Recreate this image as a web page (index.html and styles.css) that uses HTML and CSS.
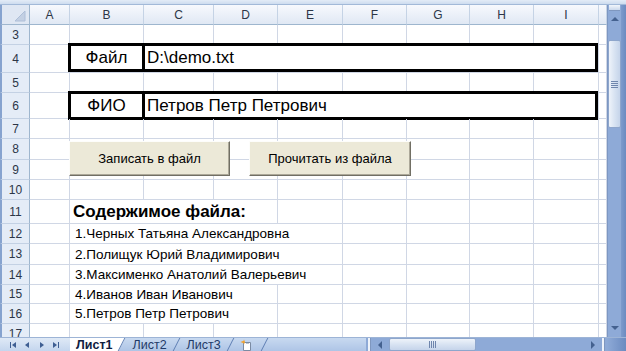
FILE: index.html
```html
<!DOCTYPE html>
<html lang="ru">
    <head>
        <meta charset="UTF-8" />
        <meta name="viewport" content="width=device-width, initial-scale=1.0" />
        <title>Лист1</title>
        <link rel="stylesheet" href="styles.css">
    </head>
    <body>
        <div class="window">
            <div class="frame-top"></div>
            <div class="main">
                <div class="sheet">
                    <table class="grid">
                        <colgroup>
                            <col class="c-num"><col class="c-a"><col class="c-b"><col class="c-c"><col class="c-d"><col class="c-e"><col class="c-f"><col class="c-g"><col class="c-h"><col class="c-i"><col class="c-j">
                        </colgroup>
                        <tr class="row-head">
                            <th class="corner">
                                <svg width="26" height="19" viewBox="0 0 26 19"><path d="M23 6V16H13z" fill="#c3d0e3" stroke="#aebfd8" stroke-width="1"/></svg>
                            </th>
                            <th>A</th><th>B</th><th>C</th><th>D</th><th>E</th><th>F</th><th>G</th><th>H</th><th>I</th><th></th>
                        </tr>
                        <tr>
                            <th>3</th><td></td><td></td><td></td><td></td><td></td><td></td><td></td><td></td><td></td><td></td>
                        </tr>
                        <tr class="row-28">
                            <th>4</th><td></td>
                            <td colspan="8" class="field-cell">
                                <div class="field">
                                    <span class="field-label">Файл</span>
                                    <span class="field-value">D:\demo.txt</span>
                                </div>
                            </td>
                            <td></td>
                        </tr>
                        <tr>
                            <th>5</th><td></td><td></td><td></td><td></td><td></td><td></td><td></td><td></td><td></td><td></td>
                        </tr>
                        <tr class="row-26">
                            <th>6</th><td></td>
                            <td colspan="8" class="field-cell">
                                <div class="field">
                                    <span class="field-label">ФИО</span>
                                    <span class="field-value">Петров Петр Петрович</span>
                                </div>
                            </td>
                            <td></td>
                        </tr>
                        <tr>
                            <th>7</th><td></td><td></td><td></td><td></td><td></td><td></td><td></td><td></td><td></td><td></td>
                        </tr>
                        <tr class="row-21">
                            <th>8</th><td></td><td></td><td></td><td></td><td></td><td></td><td></td><td></td><td></td><td></td>
                        </tr>
                        <tr>
                            <th>9</th><td></td><td></td><td></td><td></td><td></td><td></td><td></td><td></td><td></td><td></td>
                        </tr>
                        <tr>
                            <th>10</th><td></td><td></td><td></td><td></td><td></td><td></td><td></td><td></td><td></td><td></td>
                        </tr>
                        <tr class="row-24">
                            <th>11</th><td></td><td colspan="3" class="title">Содержимое файла:</td><td></td><td></td><td></td><td></td><td></td><td></td>
                        </tr>
                        <tr>
                            <th>12</th><td></td><td colspan="4" class="item">1.Черных Татьяна Александровна</td><td></td><td></td><td></td><td></td><td></td>
                        </tr>
                        <tr class="row-21">
                            <th>13</th><td></td><td colspan="4" class="item">2.Полищук Юрий Владимирович</td><td></td><td></td><td></td><td></td><td></td>
                        </tr>
                        <tr>
                            <th>14</th><td></td><td colspan="4" class="item">3.Максименко Анатолий Валерьевич</td><td></td><td></td><td></td><td></td><td></td>
                        </tr>
                        <tr class="row-19">
                            <th>15</th><td></td><td colspan="3" class="item">4.Иванов Иван Иванович</td><td></td><td></td><td></td><td></td><td></td><td></td>
                        </tr>
                        <tr>
                            <th>16</th><td></td><td colspan="3" class="item">5.Петров Петр Петрович</td><td></td><td></td><td></td><td></td><td></td><td></td>
                        </tr>
                        <tr>
                            <th>17</th><td></td><td></td><td></td><td></td><td></td><td></td><td></td><td></td><td></td><td></td>
                        </tr>
                    </table>

                    <div class="actions">
                        <button class="btn btn-write">Записать в файл</button>
                        <button class="btn btn-read">Прочитать из файла</button>
                    </div>
                </div>

                <div class="vscroll">
                    <div class="vbar">
                        <div class="split"></div>
                        <div class="arrow">
                            <svg width="14" height="17" viewBox="0 0 14 17"><path d="M3 10H11L7 6z" fill="#44618f"/></svg>
                        </div>
                        <div class="vtrack-top"></div>
                        <div class="vthumb">
                            <span class="grip"></span>
                        </div>
                        <div class="vtrack"></div>
                        <div class="arrow">
                            <svg width="14" height="17" viewBox="0 0 14 17"><path d="M3 6H11L7 10z" fill="#44618f"/></svg>
                        </div>
                    </div>
                    <div class="frame-right"></div>
                </div>
            </div>

            <div class="tabbar">
                <div class="sheet-nav">
                    <svg width="70" height="14" viewBox="0 0 70 14">
                        <g fill="#3f5f93">
                            <rect x="10" y="4" width="1" height="6"/>
                            <path d="M16 4V10L12 7z"/>
                            <path d="M29 4V10L25 7z"/>
                            <path d="M40 4V10L44 7z"/>
                            <path d="M53 4V10L57 7z"/>
                            <rect x="58" y="4" width="1" height="6"/>
                        </g>
                    </svg>
                </div>
                <div class="tabs">
                    <span class="tab tab-active">Лист1</span>
                    <span class="tab">Лист2</span>
                    <span class="tab">Лист3</span>
                    <span class="tab tab-new">
                        <svg width="14" height="12" viewBox="0 0 14 12">
                            <path d="M3.5 3.5H10.5V11.5H3.5z" fill="#fff" stroke="#7b8ba3"/>
                            <path d="M6 4H9" stroke="#7b8ba3"/>
                            <path d="M4 0.5L5 3L4 5.5L3 3z M0.5 3L3 2L5.5 3L3 4z" fill="#f0a22e"/>
                        </svg>
                    </span>
                </div>
                <div class="tab-space"></div>
                <div class="hscroll">
                    <span class="hsplit"></span>
                    <span class="harrow">
                        <svg width="14" height="14" viewBox="0 0 14 14"><path d="M9 3V11L5 7z" fill="#44618f"/></svg>
                    </span>
                    <span class="hthumb"><span class="hgrip"></span></span>
                    <span class="htrack"></span>
                    <span class="harrow">
                        <svg width="14" height="14" viewBox="0 0 14 14"><path d="M5 3V11L9 7z" fill="#44618f"/></svg>
                    </span>
                    <span class="hsplit"></span>
                </div>
                <div class="corner-frame"></div>
            </div>
        </div>
    </body>
</html>
```

FILE: styles.css
```css
* {
    box-sizing: border-box;
    margin: 0;
    padding: 0;
}
body {
    width: 626px;
    height: 351px;
    overflow: hidden;
    background: #fff;
    font-family: "Liberation Sans", Arial, sans-serif;
}
.window {
    display: flex;
    flex-direction: column;
    height: 351px;
}
.frame-top {
    height: 5px;
    background: linear-gradient(#e3ecf7, #cddcef);
    border-bottom: 1px solid #a2b9d8;
}
.main {
    display: flex;
    height: 332px;
}
.sheet {
    position: relative;
    width: 607px;
    overflow: hidden;
}

/* grid */
.grid {
    border-collapse: separate;
    border-spacing: 0;
    table-layout: fixed;
    width: 607px;
}
.c-num { width: 30px; }
.c-a { width: 40px; }
.c-b { width: 74px; }
.c-c { width: 70px; }
.c-d { width: 64px; }
.c-e { width: 65px; }
.c-f { width: 64px; }
.c-g { width: 63px; }
.c-h { width: 64px; }
.c-i { width: 65px; }
.c-j { width: 8px; }

.grid tr {
    height: 20px;
}
.grid tr.row-19 { height: 19px; }
.grid tr.row-21 { height: 21px; }
.grid tr.row-24 { height: 24px; }
.grid tr.row-26 { height: 26px; }
.grid tr.row-28 { height: 28px; }

.grid td {
    padding: 0;
    border-right: 1px solid #d0d7e5;
    border-bottom: 1px solid #d0d7e5;
    white-space: nowrap;
    overflow: visible;
    vertical-align: middle;
}
.grid th {
    padding: 0;
    font-weight: normal;
    font-size: 12px;
    color: #2c3647;
    text-align: center;
    background: #e4ecf7;
    border-right: 1px solid #9eb6ce;
    border-bottom: 1px solid #c3d1e4;
}
.grid th:first-child {
    border-left: 2px solid #86a3cf;
}
.row-head th {
    background: linear-gradient(#f7f9fd, #e0e8f4);
    border-right: 1px solid #c5d3e5;
    border-bottom: 1px solid #9eb6ce;
}
.row-head th.corner {
    border-right: 1px solid #9eb6ce;
    background: #dfe7f3;
    vertical-align: top;
    text-align: left;
}
.corner svg {
    display: block;
}

/* bordered input fields */
.field-cell {
    vertical-align: top !important;
}
.field {
    display: flex;
    height: 29px;
    margin: -2px 0 -3px -2px;
    border: 3px solid #000;
    background: #fff;
    font-size: 17px;
    color: #000;
}
.field-label {
    width: 74px;
    border-right: 3px solid #000;
    display: flex;
    align-items: center;
    justify-content: center;
}
.field-value {
    display: flex;
    align-items: center;
    padding-left: 2px;
}

/* file contents */
.title {
    padding-left: 3px !important;
    font-size: 17px;
    font-weight: bold;
}
.item {
    padding-left: 5px !important;
    font-size: 13.5px;
}

/* buttons over the sheet */
.actions {
    position: absolute;
    left: 69px;
    top: 136px;
    display: flex;
    gap: 19px;
}
.btn {
    height: 35px;
    background: #ece9d8;
    border: 1px solid;
    border-color: #fdfdfb #716f64 #716f64 #fdfdfb;
    box-shadow: inset -1px -1px #aca899;
    font-family: "Liberation Sans", Arial, sans-serif;
    font-size: 13px;
    color: #000;
}
.btn-write { width: 161px; }
.btn-read { width: 162px; }

/* vertical scroll bar */
.vscroll {
    display: flex;
    width: 19px;
}
.vbar {
    width: 14px;
    display: flex;
    flex-direction: column;
    background: #8eaad7;
    border-left: 1px solid #7d97c2;
}
.split {
    height: 6px;
    margin: 0 1px;
    background: linear-gradient(#f2f6fb, #cad8ec);
    border-bottom: 1px solid #7f97bf;
}
.arrow {
    height: 17px;
}
.arrow svg {
    display: block;
}
.vtrack-top {
    height: 12px;
}
.vthumb {
    height: 88px;
    border: 1px solid #8ea6cc;
    border-radius: 2px;
    background: linear-gradient(to right, #eef3fa, #d8e3f2 50%, #c5d4ea);
    display: flex;
    align-items: center;
    justify-content: center;
}
.grip {
    width: 7px;
    height: 7px;
    background: repeating-linear-gradient(#6f86ad 0 1px, transparent 1px 2px);
}
.vtrack {
    flex: 1;
}
.frame-right {
    flex: 1;
    background: linear-gradient(to right, #7d9bcc, #6b8bc0);
}

/* sheet tabs and horizontal scroll */
.tabbar {
    position: relative;
    z-index: 0;
    display: flex;
    height: 14px;
    background: linear-gradient(#c8d9f0, #aec5e6);
    border-top: 1px solid #9db4d6;
}
.sheet-nav {
    width: 70px;
    background: linear-gradient(#dfe9f6, #c4d6ee);
}
.sheet-nav svg {
    display: block;
}
.tabs {
    display: flex;
}
.tab {
    position: relative;
    display: flex;
    align-items: center;
    height: 13px;
    padding: 0 13px 0 7px;
    font-size: 12.5px;
    color: #1f3a68;
}
.tab::after {
    content: "";
    position: absolute;
    right: 3px;
    top: 0;
    bottom: 0;
    border-right: 1px solid #5f7fb3;
    transform: skewX(-27deg);
}
.tab-active {
    font-weight: bold;
    color: #0f203f;
    padding-left: 6px;
}
.tab-active::before {
    content: "";
    position: absolute;
    top: 0;
    bottom: 0;
    left: -12px;
    right: 3px;
    background: #fff;
    transform: skewX(-27deg);
    z-index: -1;
}
.tab-new {
    padding: 0 14px 0 6px;
}
.tab-new svg {
    display: block;
}
.tab-space {
    flex: 1;
}
.hscroll {
    display: flex;
    width: 241px;
    height: 13px;
    background: #8eaad7;
}
.hsplit {
    width: 7px;
    background: linear-gradient(to right, transparent 2px, #eef3fa 2px 4px, #7f97bf 4px 5px, transparent 5px);
}
.harrow {
    width: 14px;
}
.harrow svg {
    display: block;
}
.hthumb {
    width: 87px;
    margin-left: 2px;
    border: 1px solid #8ea6cc;
    border-radius: 2px;
    background: linear-gradient(#eef3fa, #d8e3f2 50%, #c5d4ea);
    display: flex;
    align-items: center;
    justify-content: center;
}
.hgrip {
    width: 7px;
    height: 7px;
    background: repeating-linear-gradient(to right, #6f86ad 0 1px, transparent 1px 2px);
}
.htrack {
    flex: 1;
}
.corner-frame {
    width: 19px;
    background: linear-gradient(to right, #8eaad7, #6b8bc0);
}
```
